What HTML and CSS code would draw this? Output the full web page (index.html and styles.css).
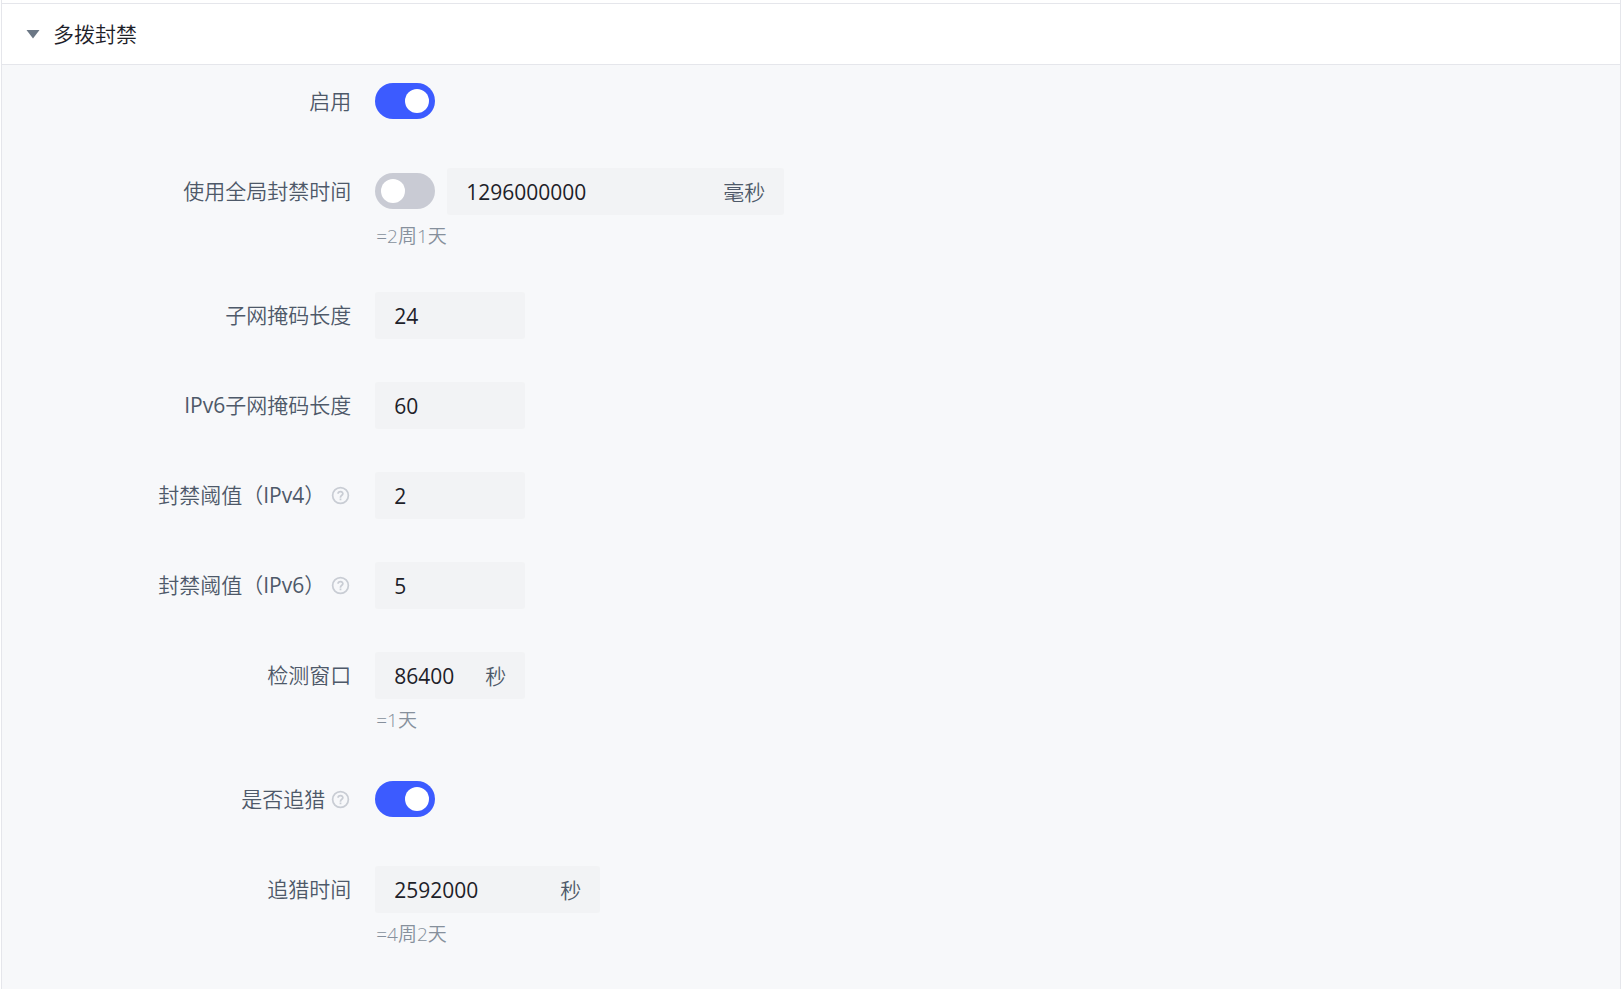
FILE: index.html
```html
<!DOCTYPE html>
<html lang="zh-CN">
<head>
<meta charset="utf-8">
<meta name="viewport" content="width=device-width, initial-scale=1">
<title>多拨封禁</title>
<link rel="stylesheet" href="styles.css">
</head>
<body>
<svg class="sprite" aria-hidden="true">
  <symbol id="question" viewBox="0 0 48 48">
    <path d="M42 24c0 9.941-8.059 18-18 18S6 33.941 6 24 14.059 6 24 6s18 8.059 18 18Z"/>
    <path d="M24.006 31v4.008m0-6.008L24 28c0-3 3-4 4.78-6.402C30.558 19.195 28.288 15 23.987 15c-4.014 0-5.382 2.548-5.388 4.514v.465"/>
  </symbol>
</svg>
<main class="collapse">
  <button class="collapse-header" type="button" aria-expanded="true" aria-controls="panel">
    <svg class="caret" viewBox="0 0 14 10" aria-hidden="true"><path d="M0.500 1h13L7 9.500z"/></svg>
    <span>多拨封禁</span>
  </button>
  <form class="panel" id="panel">
    <div class="row">
      <label class="label" for="enabled">启用</label>
      <div class="control"><input class="switch" id="enabled" type="checkbox" role="switch" checked></div>
    </div>
    <div class="row">
      <label class="label" for="global">使用全局封禁时间</label>
      <div class="control">
        <input class="switch" id="global" type="checkbox" role="switch">
        <div class="field wide"><input id="ban" inputmode="numeric" aria-label="封禁时间" value="1296000000"><label for="ban">毫秒</label></div>
      </div>
      <p class="hint">=2周1天</p>
    </div>
    <div class="row">
      <label class="label" for="mask4">子网掩码长度</label>
      <div class="control"><div class="field"><input id="mask4" inputmode="numeric" value="24"></div></div>
    </div>
    <div class="row">
      <label class="label" for="mask6"><span class="latin">IPv6</span>子网掩码长度</label>
      <div class="control"><div class="field"><input id="mask6" inputmode="numeric" value="60"></div></div>
    </div>
    <div class="row">
      <label class="label" for="limit4">封禁阈值（<span class="latin">IPv4</span>）<svg class="help" aria-hidden="true"><use href="#question"/></svg></label>
      <div class="control"><div class="field"><input id="limit4" inputmode="numeric" value="2"></div></div>
    </div>
    <div class="row">
      <label class="label" for="limit6">封禁阈值（<span class="latin">IPv6</span>）<svg class="help" aria-hidden="true"><use href="#question"/></svg></label>
      <div class="control"><div class="field"><input id="limit6" inputmode="numeric" value="5"></div></div>
    </div>
    <div class="row">
      <label class="label" for="window">检测窗口</label>
      <div class="control"><div class="field"><input id="window" inputmode="numeric" value="86400"><span>秒</span></div></div>
      <p class="hint">=1天</p>
    </div>
    <div class="row">
      <label class="label" for="hunt">是否追猎<svg class="help" aria-hidden="true"><use href="#question"/></svg></label>
      <div class="control"><input class="switch" id="hunt" type="checkbox" role="switch" checked></div>
    </div>
    <div class="row">
      <label class="label" for="huntTime">追猎时间</label>
      <div class="control"><div class="field medium"><input id="huntTime" inputmode="numeric" value="2592000"><span>秒</span></div></div>
      <p class="hint">=4周2天</p>
    </div>
  </form>
</main>
</body>
</html>
```
FILE: styles.css
```css
* {
  box-sizing: border-box;
}

body {
  margin: 0;
  background: #fff;
  color: #1d2129;
  font-family: "Open Sans", "Noto Sans CJK SC", sans-serif;
  font-size: 21px;
  line-height: 32px;
}

input,
button {
  font: inherit;
  color: inherit;
}

.sprite {
  position: absolute;
  width: 0;
  height: 0;
}

.collapse {
  display: flex;
  flex-direction: column;
  min-height: 100vh;
  margin: 0 1px;
  padding-top: 3px;
  border: solid #e5e6eb;
  border-width: 0 1px;
}

.collapse-header {
  display: flex;
  align-items: center;
  gap: 13px;
  height: 62px;
  padding: 0 24px;
  border: solid #e5e6eb;
  border-width: 1px 0;
  background: #fff;
  font-weight: 350;
  cursor: pointer;
}

.caret {
  width: 14px;
  height: 10px;
  fill: #6b7785;
}

.panel {
  flex: 1;
  padding: 13px 62px 0;
  background: #f7f8fa;
}

.row {
  display: grid;
  grid-template-columns: 5fr 19fr;
  margin-bottom: 43px;
}

.label {
  display: flex;
  align-items: center;
  justify-content: flex-end;
  height: 46px;
  padding-right: 24px;
  color: #4e5969;
  font-weight: 350;
  white-space: nowrap;
}

.latin {
  font-weight: 400;
}

.help {
  width: 21px;
  height: 21px;
  margin-left: 5px;
  fill: none;
  stroke: #c9cdd4;
  stroke-width: 4;
}

.control {
  display: flex;
  align-items: flex-start;
  gap: 12px;
  height: 47px;
}

.switch {
  flex: none;
  appearance: none;
  width: 60px;
  height: 36px;
  margin: 5px 0 0;
  padding: 6px;
  border-radius: 18px;
  background: #c9cbd4;
  cursor: pointer;
}

.switch::before {
  content: "";
  display: block;
  width: 24px;
  height: 24px;
  border-radius: 50%;
  background: #fff;
}

.switch:checked {
  padding-left: 30px;
  background: #3c5bff;
}

.field {
  display: flex;
  align-items: center;
  gap: 12px;
  width: 150px;
  height: 47px;
  padding: 0 19px;
  border-radius: 3px;
  background: #f2f3f5;
  color: #4e5969;
  font-weight: 350;
}

.field.medium {
  width: 225px;
}

.field.wide {
  width: 337px;
}

.field input {
  flex: 1;
  min-width: 0;
  padding: 0;
  border: 0;
  outline: 0;
  background: none;
  color: #1d2129;
  font-weight: 400;
}

.hint {
  grid-column: 2;
  margin: 0;
  padding: 8px 0 0 1px;
  color: #86909c;
  font-size: 19px;
  font-weight: 350;
  line-height: 26px;
}
```
